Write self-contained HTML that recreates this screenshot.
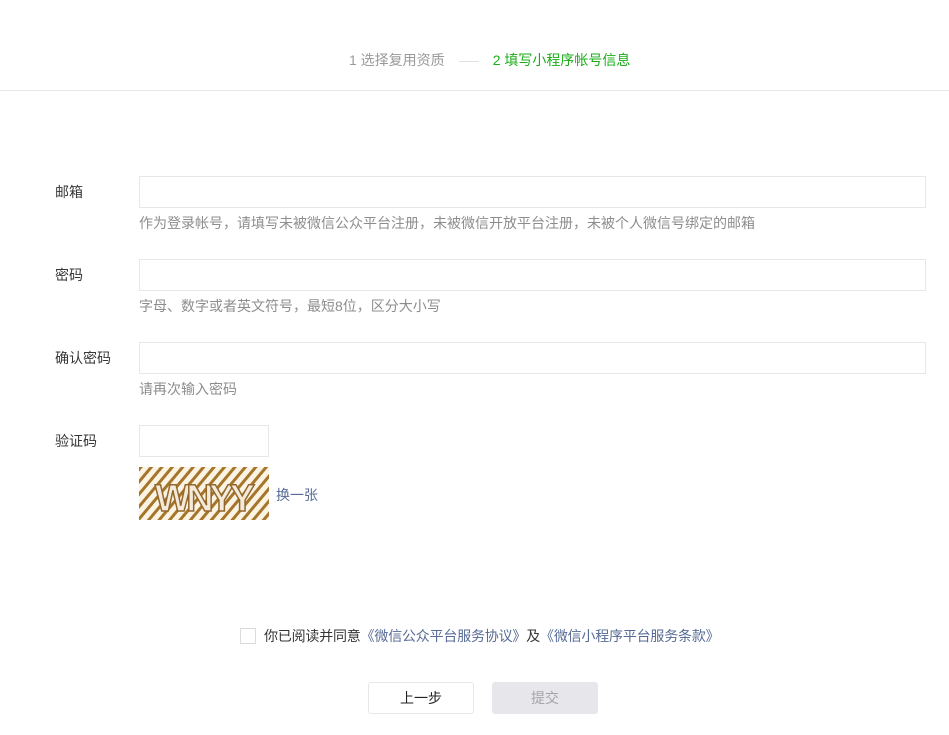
<!DOCTYPE html>
<html><head><meta charset="utf-8"><style>
*{margin:0;padding:0;box-sizing:border-box}
body{width:949px;height:735px;background:#fff;font-family:"Liberation Sans","Noto Sans CJK SC",sans-serif;font-size:14px;color:#353535;position:relative;overflow:hidden}
.abs{position:absolute}
.hdr{top:0;left:0;width:949px;height:91px;border-bottom:1px solid #e7e7eb}
.steps{top:51px;left:349px;font-size:14px;white-space:nowrap;line-height:18px}
.lbl{left:55px;font-size:14px;color:#353535;line-height:18px}
.inp{left:139px;width:787px;height:32px;border:1px solid #e7e7eb}
.tip{left:139px;font-size:14px;color:#8d8d8d;line-height:18px;white-space:nowrap}
a{color:#576b95;text-decoration:none}
.btn{height:32px;border-radius:3px;font-size:14px;text-align:center;line-height:30px}
</style></head><body>
<div class="abs hdr"></div>
<div class="abs steps"><span style="color:#9a9a9a">1 选择复用资质</span><span style="display:inline-block;width:20px;border-top:1px solid #e0e0e0;vertical-align:middle;margin:0 14px"></span><span style="color:#1aad19">2 填写小程序帐号信息</span></div>

<div class="abs lbl" style="top:183px">邮箱</div>
<div class="abs inp" style="top:176px"></div>
<div class="abs tip" style="top:214px">作为登录帐号，请填写未被微信公众平台注册，未被微信开放平台注册，未被个人微信号绑定的邮箱</div>

<div class="abs lbl" style="top:266px">密码</div>
<div class="abs inp" style="top:259px"></div>
<div class="abs tip" style="top:297px">字母、数字或者英文符号，最短8位，区分大小写</div>

<div class="abs lbl" style="top:349px">确认密码</div>
<div class="abs inp" style="top:342px"></div>
<div class="abs tip" style="top:380px">请再次输入密码</div>

<div class="abs lbl" style="top:432px">验证码</div>
<div class="abs inp" style="top:425px;width:130px"></div>
<svg class="abs" style="left:139px;top:467px" width="130" height="53">
<defs><pattern id="p" width="8" height="8" patternUnits="userSpaceOnUse" patternTransform="rotate(40)"><rect width="8" height="8" fill="#fbf3e4"/><rect width="3" height="8" fill="#a5752a"/></pattern></defs>
<rect width="130" height="53" fill="url(#p)"/>
<text x="16" y="44" font-family="Liberation Sans" font-weight="bold" font-size="38" fill="#f3eadb" stroke="#94682a" stroke-width="1.5" textLength="100">WNYY</text>
</svg>
<div class="abs" style="left:276px;top:485px;font-size:14px"><a>换一张</a></div>

<div class="abs" style="left:240px;top:628px;width:16px;height:16px;border:1px solid #d9dadc;background:#fff"></div>
<div class="abs" style="left:264px;top:627px;font-size:14px;line-height:18px;white-space:nowrap;letter-spacing:-0.2px">你已阅读并同意<a>《微信公众平台服务协议》</a>及<a>《微信小程序平台服务条款》</a></div>

<div class="abs btn" style="left:368px;top:682px;width:106px;border:1px solid #e4e8eb;color:#222">上一步</div>
<div class="abs btn" style="left:492px;top:682px;width:106px;border:1px solid #e4e8eb;background:#e7e7eb;color:#a5a5a5">提交</div>
</body></html>
